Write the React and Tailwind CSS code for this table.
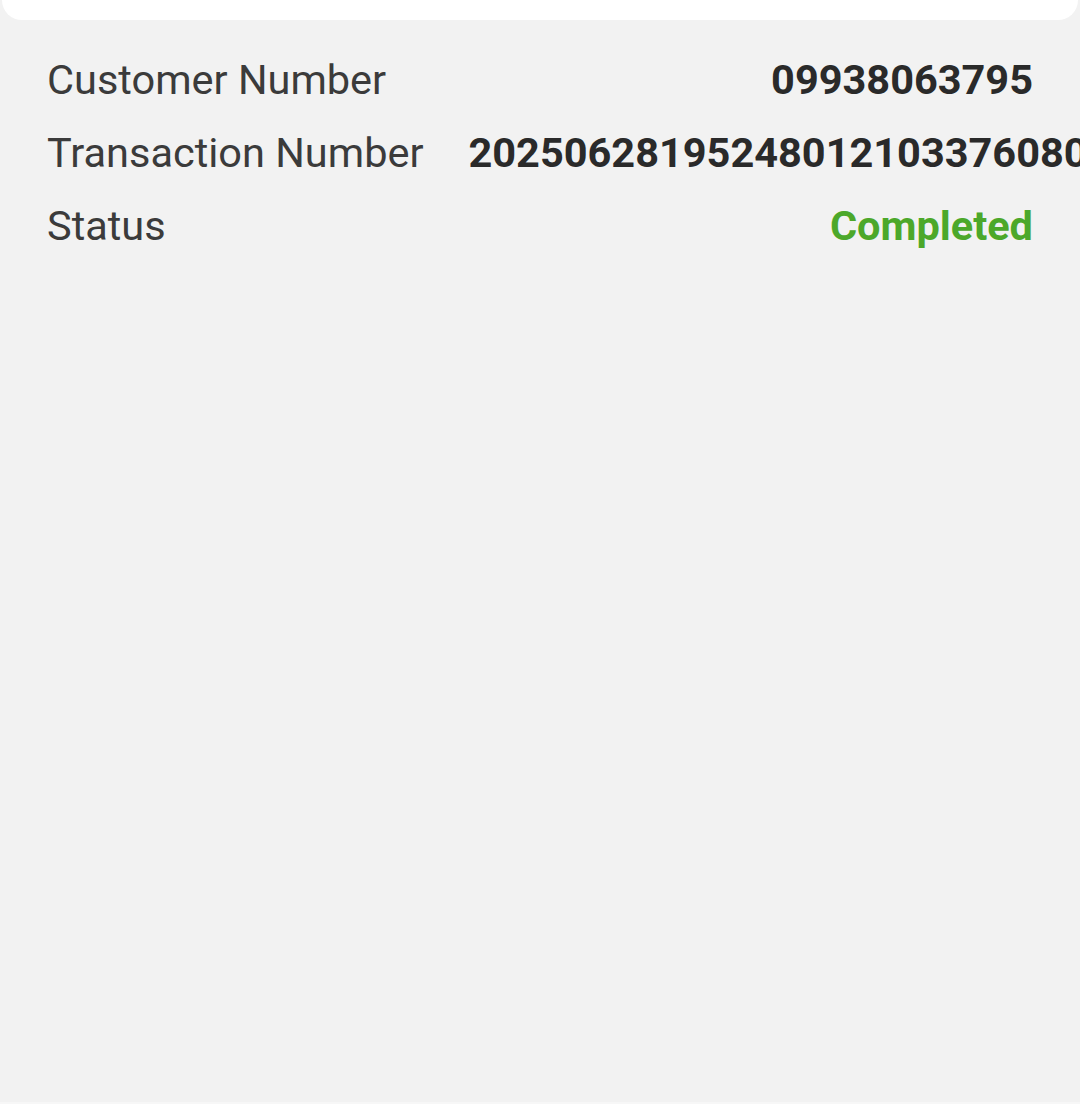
import React from 'react';

const rows = [
    { label: 'Customer Number', value: '09938063795' },
    { label: 'Transaction Number', value: '20250628195248012103376080' },
    { label: 'Status', value: 'Completed', color: 'text-[#4ca82a]' },
];

const App = () => {
    return (
        <div className="w-[1080px] h-[1104px] bg-[#f2f2f2] overflow-hidden border-b-2 border-[#f7f7f7] font-['Roboto',sans-serif]">
            {/* top card edge */}
            <div className="mx-[2px] h-[20px] bg-white rounded-b-[22px]" />

            {/* details */}
            <div className="flex flex-col pl-[47px] pr-[47px] pt-[37px] gap-[28px]">
                {rows.map(row => (
                    <div key={row.label} className="flex justify-between items-center gap-[45px] h-[45px] text-[41.5px] leading-none">
                        <span className="shrink-0 text-[#3b3b3b]">{row.label}</span>
                        <span className={`shrink-0 whitespace-nowrap font-bold ${row.color || 'text-[#2a2a2a]'}`}>{row.value}</span>
                    </div>
                ))}
            </div>
        </div>
    );
};

export default App;
